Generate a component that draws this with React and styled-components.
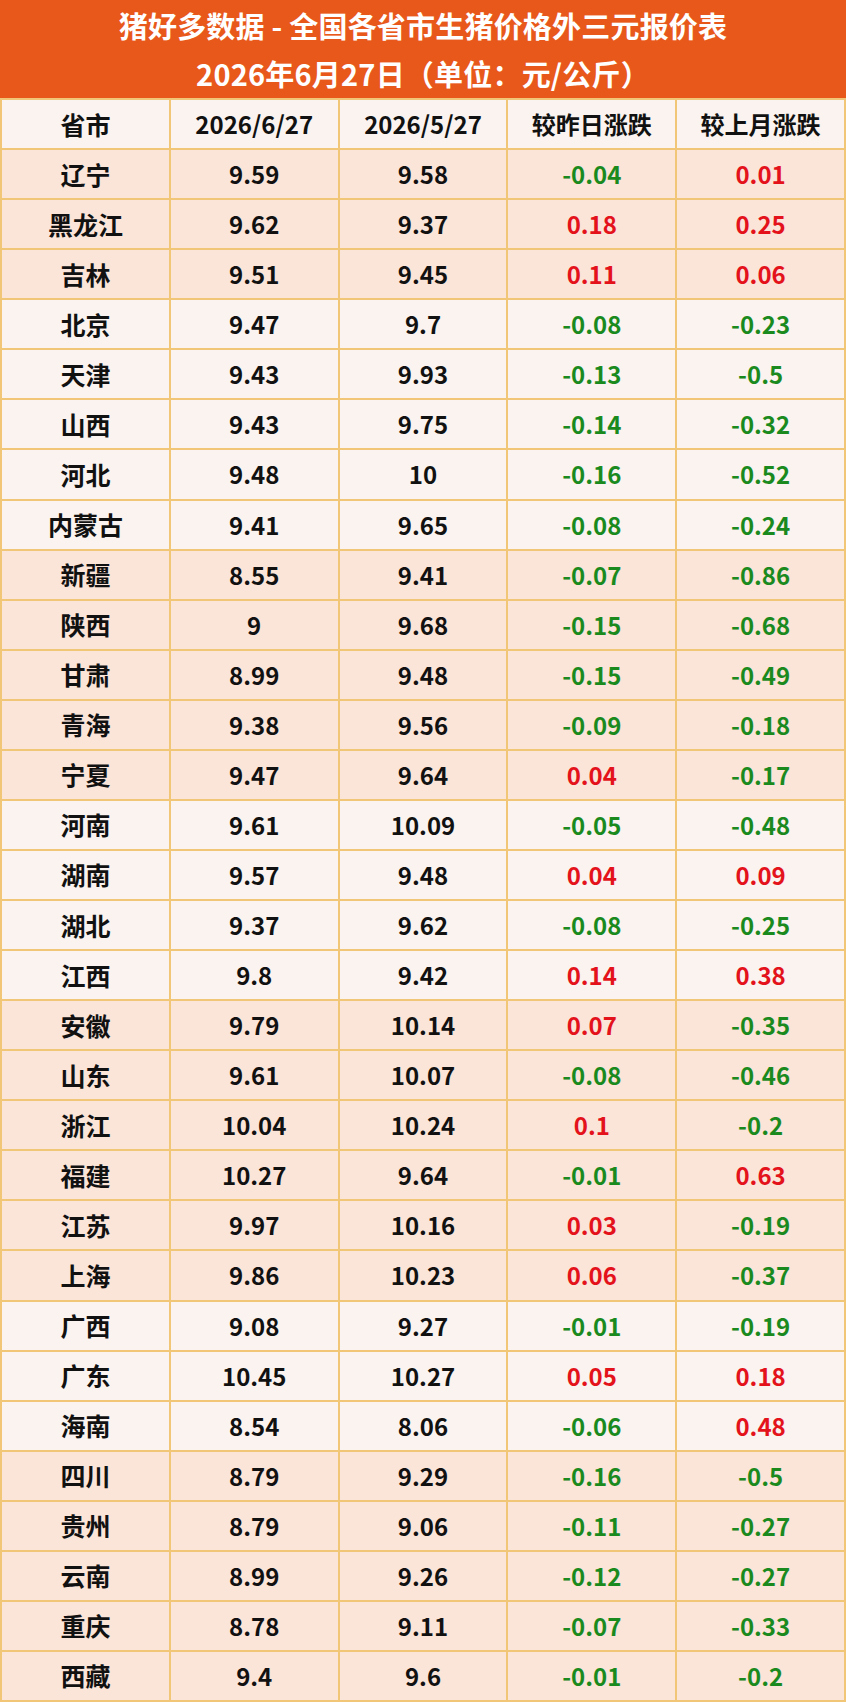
import React from 'react';
import styled, { createGlobalStyle } from 'styled-components';

const GlobalStyle = createGlobalStyle`
  html, body {
    margin: 0;
    padding: 0;
    background: #fff;
  }
  body {
    font-family: "Noto Sans CJK SC", "Noto Sans", sans-serif;
  }
`;

const Sheet = styled.div`
  width: 846px;
  height: 1702px;
  display: flex;
  flex-direction: column;
  overflow: hidden;
`;

const TitleBar = styled.div`
  height: 98px;
  background: #e8581b;
  color: #fff;
  display: grid;
  grid-template-rows: 1fr 1fr;
  align-items: center;
  justify-items: center;
  font-weight: 700;
  font-size: 29px;
  letter-spacing: 0.2px;
  border-bottom: 2px solid #f2c677;
`;

const TitleLine = styled.div`
  line-height: 1;
  padding-top: ${({ second }) => (second ? '0' : '2px')};
`;

const Table = styled.div`
  flex: 1;
  display: grid;
  grid-template-columns: repeat(5, 1fr);
  grid-auto-rows: 1fr;
  border-left: 2px solid #f2c677;
`;

const Cell = styled.div`
  display: flex;
  align-items: center;
  justify-content: center;
  border-right: 2px solid #f2c677;
  border-bottom: 2px solid #f2c677;
  background: ${({ peach }) => (peach ? '#fbe4d8' : '#faf3ef')};
  color: ${({ tone }) => (tone === 'up' ? '#e3121b' : tone === 'down' ? '#1b8a1e' : '#111')};
  font-size: ${({ name }) => (name ? '25px' : '24px')};
  font-weight: 700;
  line-height: 1;
`;

const headers = ['省市', '2026/6/27', '2026/5/27', '较昨日涨跌', '较上月涨跌'];

// [province, today, month ago, vs yesterday, vs last month, peach row]
const rows = [
  ['辽宁', '9.59', '9.58', '-0.04', '0.01', 1],
  ['黑龙江', '9.62', '9.37', '0.18', '0.25', 1],
  ['吉林', '9.51', '9.45', '0.11', '0.06', 1],
  ['北京', '9.47', '9.7', '-0.08', '-0.23', 0],
  ['天津', '9.43', '9.93', '-0.13', '-0.5', 0],
  ['山西', '9.43', '9.75', '-0.14', '-0.32', 0],
  ['河北', '9.48', '10', '-0.16', '-0.52', 0],
  ['内蒙古', '9.41', '9.65', '-0.08', '-0.24', 0],
  ['新疆', '8.55', '9.41', '-0.07', '-0.86', 1],
  ['陕西', '9', '9.68', '-0.15', '-0.68', 1],
  ['甘肃', '8.99', '9.48', '-0.15', '-0.49', 1],
  ['青海', '9.38', '9.56', '-0.09', '-0.18', 1],
  ['宁夏', '9.47', '9.64', '0.04', '-0.17', 1],
  ['河南', '9.61', '10.09', '-0.05', '-0.48', 0],
  ['湖南', '9.57', '9.48', '0.04', '0.09', 0],
  ['湖北', '9.37', '9.62', '-0.08', '-0.25', 0],
  ['江西', '9.8', '9.42', '0.14', '0.38', 0],
  ['安徽', '9.79', '10.14', '0.07', '-0.35', 1],
  ['山东', '9.61', '10.07', '-0.08', '-0.46', 1],
  ['浙江', '10.04', '10.24', '0.1', '-0.2', 1],
  ['福建', '10.27', '9.64', '-0.01', '0.63', 1],
  ['江苏', '9.97', '10.16', '0.03', '-0.19', 1],
  ['上海', '9.86', '10.23', '0.06', '-0.37', 1],
  ['广西', '9.08', '9.27', '-0.01', '-0.19', 0],
  ['广东', '10.45', '10.27', '0.05', '0.18', 0],
  ['海南', '8.54', '8.06', '-0.06', '0.48', 0],
  ['四川', '8.79', '9.29', '-0.16', '-0.5', 1],
  ['贵州', '8.79', '9.06', '-0.11', '-0.27', 1],
  ['云南', '8.99', '9.26', '-0.12', '-0.27', 1],
  ['重庆', '8.78', '9.11', '-0.07', '-0.33', 1],
  ['西藏', '9.4', '9.6', '-0.01', '-0.2', 1],
];

const toneOf = (v) => (v.startsWith('-') ? 'down' : 'up');

const App = () => (
  <Sheet>
    <GlobalStyle />
    <TitleBar>
      <TitleLine>猪好多数据 - 全国各省市生猪价格外三元报价表</TitleLine>
      <TitleLine second>2026年6月27日（单位：元/公斤）</TitleLine>
    </TitleBar>
    <Table>
      {headers.map((h, i) => (
        <Cell key={h} name={i === 0}>{h}</Cell>
      ))}
      {rows.map(([name, now, prev, day, month, peach]) => (
        <React.Fragment key={name}>
          <Cell peach={peach} name>{name}</Cell>
          <Cell peach={peach}>{now}</Cell>
          <Cell peach={peach}>{prev}</Cell>
          <Cell peach={peach} tone={toneOf(day)}>{day}</Cell>
          <Cell peach={peach} tone={toneOf(month)}>{month}</Cell>
        </React.Fragment>
      ))}
    </Table>
  </Sheet>
);

export default App;
